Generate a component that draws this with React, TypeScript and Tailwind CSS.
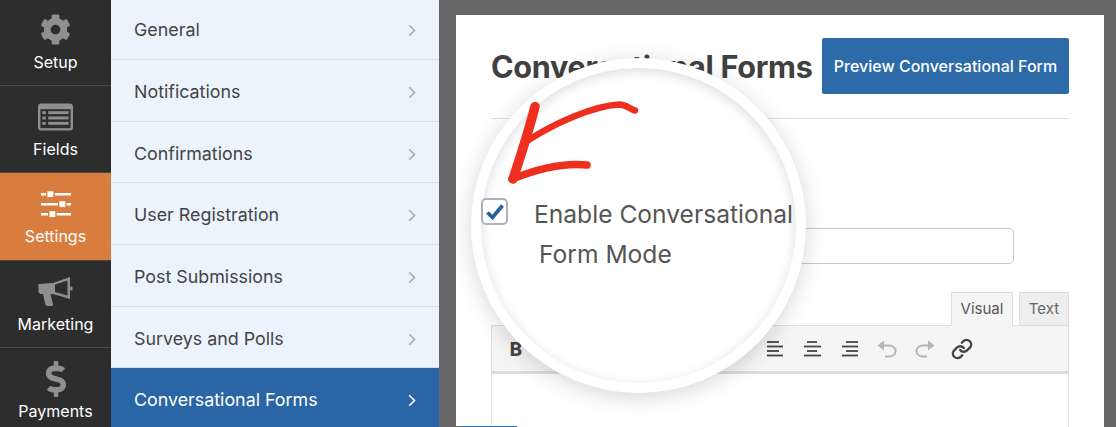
import { FaCog, FaDollarSign } from "react-icons/fa";
import { Link } from "lucide-react";

const FONT = "[font-family:Inter,'Liberation_Sans',sans-serif]";

function ListIcon() {
  return (
    <svg width="35" height="28" viewBox="0 0 36 28">
      <rect x="0" y="0" width="36" height="28" rx="3.5" fill="#8f8f8f" />
      <rect x="2.5" y="6" width="31" height="19.5" fill="#2d2d2d" />
      <rect x="4.5" y="8" width="3.5" height="3" fill="#8f8f8f" />
      <rect x="4.5" y="13.5" width="3.5" height="3" fill="#8f8f8f" />
      <rect x="4.5" y="19" width="3.5" height="3" fill="#8f8f8f" />
      <rect x="10.5" y="8" width="21" height="3" fill="#8f8f8f" />
      <rect x="10.5" y="13.5" width="21" height="3" fill="#8f8f8f" />
      <rect x="10.5" y="19" width="21" height="3" fill="#8f8f8f" />
    </svg>
  );
}

function SlidersIcon() {
  return (
    <svg width="30" height="28" viewBox="0 -0.5 30 28">
      <g fill="#fff">
        <rect x="0" y="2.5" width="30" height="2.5" />
        <rect x="0" y="12.5" width="30" height="2.5" />
        <rect x="0" y="22.5" width="30" height="2.5" />
      </g>
      <g fill="#fff" stroke="#d97d3f" strokeWidth="1.4">
        <rect x="5.7" y="0" width="7.3" height="7.3" />
        <rect x="17.7" y="10" width="7.3" height="7.3" />
        <rect x="7.7" y="20" width="7.3" height="7.3" />
      </g>
    </svg>
  );
}

function HornIcon() {
  return (
    <svg width="35" height="31" viewBox="0 0 35 31">
      <path
        d="M0.5 8 L15 7 L32 1 L32 23 L15 18 L12.5 18 L15 28.5 C15 30 14 30 13 30 L9.5 30 C8 30 7.5 29 7 27 L5 18 L2 18 L0.5 16 Z"
        fill="#8f8f8f"
      />
      <path d="M17 8.5 L29.5 4.5 L29.5 19.5 L17 16 Z" fill="#2d2d2d" />
      <rect x="32" y="10.5" width="2.5" height="4" rx="1" fill="#8f8f8f" />
    </svg>
  );
}

const sideItems = [
  { label: "Setup", icon: <FaCog size={31} color="#8f8f8f" /> },
  { label: "Fields", icon: <ListIcon /> },
  { label: "Settings", icon: <SlidersIcon />, active: true },
  { label: "Marketing", icon: <HornIcon /> },
  { label: "Payments", icon: <FaDollarSign size={36} color="#8f8f8f" /> },
];

const menu = [
  "General",
  "Notifications",
  "Confirmations",
  "User Registration",
  "Post Submissions",
  "Surveys and Polls",
  "Conversational Forms",
];

function Chevron({ color }: { color: string }) {
  return (
    <svg width="8" height="13" viewBox="0 0 8 13" fill="none">
      <path d="M1.2 1.2 L6.5 6.5 L1.2 11.8" stroke={color} strokeWidth="1.6" />
    </svg>
  );
}

function AlignIcon({ kind }: { kind: "l" | "c" | "r" }) {
  const short = kind === "l" ? [0, 12] : kind === "c" ? [3, 13] : [5, 17];
  const mid = kind === "l" ? [0, 16] : kind === "c" ? [0, 17] : [1, 17];
  return (
    <svg width="17" height="16" viewBox="0 0 17 16" stroke="#444" strokeWidth="1.8">
      <path d={`M${short[0]} 1 H${short[1]}`} />
      <path d={`M${mid[0]} 5.5 H${mid[1]}`} />
      <path d={`M${short[0]} 10 H${short[1]}`} />
      <path d={`M${mid[0]} 14.5 H${mid[1]}`} />
    </svg>
  );
}

function UndoIcon({ flip }: { flip?: boolean }) {
  return (
    <svg width="20" height="18" viewBox="0 0 20 18" className={flip ? "-scale-x-100" : ""} fill="none">
      <path d="M0.5 5.5 L7 0.5 V10.5 Z" fill="#b5b5b5" />
      <path d="M6 5.5 H12 C16 5.5 18.5 8 18.5 11 C18.5 14 16 16.5 12 16.5 H8" stroke="#b5b5b5" strokeWidth="2" />
    </svg>
  );
}

function Arrow() {
  return (
    <svg className="absolute left-[500px] top-[95px]" width="145" height="95" viewBox="500 95 145 95" fill="none">
      <g stroke="#ee2f1f" strokeLinecap="round" strokeLinejoin="round">
        <path d="M535 106.5 C 530 126, 522 152, 513 179" strokeWidth="9.5" />
        <path d="M527 141 C 556 122, 594 106, 619 104.5 C 627 104.5, 629 109, 635 110.5" strokeWidth="6.5" />
        <path d="M512 179 C 532 171, 560 162, 587 165" strokeWidth="7.5" />
      </g>
    </svg>
  );
}

export default function App() {
  return (
    <div className={`relative flex h-[427px] w-[1116px] overflow-hidden ${FONT}`}>
      <aside className="flex w-[111px] shrink-0 flex-col overflow-hidden bg-[#2d2d2d] pt-0">
        <div className="-mt-[1.25px] flex flex-col">
          {sideItems.map((s) => (
            <div
              key={s.label}
              className={`flex h-[87.25px] shrink-0 flex-col items-center border-b border-[#484848] pt-[12px] text-[16px] leading-[20px] text-white ${
                s.active ? "bg-[#d97d3f]" : ""
              }`}
            >
              <div className="flex h-[38px] items-center justify-center">{s.icon}</div>
              <span className="mt-[3px]">{s.label}</span>
            </div>
          ))}
        </div>
      </aside>

      <nav className="flex w-[328px] shrink-0 flex-col overflow-hidden bg-[#ebf3fc]">
        <div className="-mt-[1.5px] flex flex-col">
          {menu.map((m, i) => {
            const active = i === menu.length - 1;
            return (
              <div
                key={m}
                className={`flex h-[61.65px] shrink-0 items-center justify-between pl-[23px] pr-[23px] text-[17.85px] ${
                  active
                    ? "bg-[#2a66a6] pt-[2px] text-white"
                    : "border-b-[1.5px] border-[#d7dfe8] pt-[4px] text-[#444]"
                }`}
              >
                <span>{m}</span>
                <Chevron color={active ? "#fff" : "#aaa"} />
              </div>
            );
          })}
        </div>
      </nav>

      <main className="flex min-w-0 flex-1 bg-[#666] pl-[17px] pr-[12px] pt-[15px]">
        <div className="relative flex h-[412px] min-w-0 flex-1 flex-col bg-white px-[35px]">
          <div className="mt-[23px] flex h-[56px] items-center justify-between">
            <h1 className="whitespace-nowrap pt-px text-[30.6px] font-bold tracking-[-0.3px] text-[#404040]">Conversational Forms</h1>
            <button className="flex h-[56px] w-[247px] shrink-0 items-center justify-center rounded-[2px] bg-[#2d6aa8] text-[16px] font-medium text-white">
              Preview Conversational Form
            </button>
          </div>
          <div className="mt-[24px] h-px bg-[#e0e0e0]" />
          <div className="mt-[109px] h-[36px] w-[523px] rounded-[5px] border border-[#c8c8c8]" />
          <div className="mt-[28px] flex justify-end gap-[6px] text-[15px] leading-[32px]">
            <div className="z-10 -mb-px h-[34px] w-[62px] border border-b-0 border-[#ddd] bg-[#f5f5f5] text-center text-[#555]">
              Visual
            </div>
            <div className="h-[33px] w-[50px] border border-b-0 border-[#ddd] bg-[#eee] text-center text-[#666]">
              Text
            </div>
          </div>
          <div className="relative flex h-[49px] items-center border border-b-[3px] border-[#ddd] bg-[#f5f5f5] pl-[17px]">
            <span className="w-[259px] font-['Open_Sans',sans-serif] text-[20px] font-bold text-[#444]">B</span>
            <div className="ml-[-1px] flex items-center">
              <AlignIcon kind="l" />
              <div className="ml-[20px]"><AlignIcon kind="c" /></div>
              <div className="ml-[20px]"><AlignIcon kind="r" /></div>
              <div className="ml-[19px]"><UndoIcon /></div>
              <div className="ml-[18px]"><UndoIcon flip /></div>
              <Link className="ml-[16px]" size={22} color="#444" strokeWidth={2.6} />
            </div>
          </div>
          <div className="flex-1 border-x border-[#ddd]" />
          <div className="absolute bottom-0 left-[7px] h-px w-[54px] bg-[#2d6aa8]" />
          <div className="absolute bottom-0 left-0 h-px w-[7px] bg-[#666]" />
        </div>
      </main>

      {/* magnifier */}
      <div className="absolute left-[471px] top-[58px] h-[335px] w-[335px] rounded-full bg-white shadow-[0_4px_22px_rgba(0,0,0,0.16)]">
        <div className="absolute inset-[10px] rounded-full bg-white shadow-[inset_0_3px_12px_rgba(0,0,0,0.14)]" />
      </div>
      <Arrow />
      <div className="absolute left-[481px] top-[198px] flex h-[27px] w-[27px] items-center justify-center rounded-[5px] border-2 border-[#a9b2bd] bg-white">
        <svg width="20" height="18" viewBox="0 0 20 18" fill="none">
          <path d="M2.5 9.5 L7.5 14.5 L17.5 2.5" stroke="#2c5f97" strokeWidth="3.8" />
        </svg>
      </div>
      <span className="absolute left-[534px] top-[199px] whitespace-nowrap text-[24.6px] leading-[30px] text-[#555]">
        Enable Conversational
      </span>
      <span className="absolute left-[539px] top-[239px] whitespace-nowrap text-[24.6px] leading-[30px] text-[#555]">
        Form Mode
      </span>
    </div>
  );
}
